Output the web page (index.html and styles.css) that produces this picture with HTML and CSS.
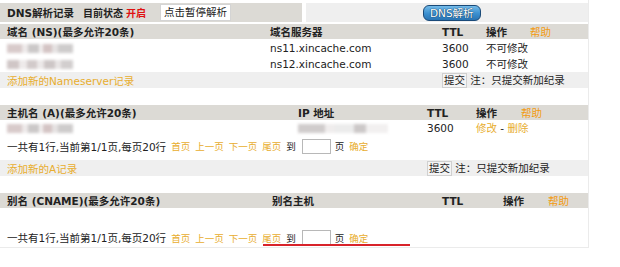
FILE: index.html
```html
<!DOCTYPE html>
<html lang="zh-CN">
<head>
<meta charset="utf-8">
<title>DNS解析记录</title>
<link rel="stylesheet" href="styles.css">
</head>
<body>
<div class="page">
  <div class="topbar">
    <div class="top-left">
      <b class="t-title">DNS解析记录</b>
      <b class="t-state">目前状态</b>
      <b class="t-on">开启</b>
      <span class="pausebtn">点击暂停解析</span>
    </div>
    <div class="top-right"><span class="dnsbtn">DNS解析</span></div>
  </div>

  <section class="sec sec-ns">
    <div class="row head">
      <span>域名 (NS)(最多允许20条)</span><span>域名服务器</span><span>TTL</span><span>操作</span><span class="help">帮助</span>
    </div>
    <div class="row">
      <span><i class="blur"></i></span><span>ns11.xincache.com</span><span>3600</span><span>不可修改</span><span></span>
    </div>
    <div class="row">
      <span><i class="blur b2"></i></span><span>ns12.xincache.com</span><span>3600</span><span>不可修改</span><span></span>
    </div>
    <div class="row add">
      <span class="link">添加新的Nameserver记录</span><span></span>
      <span class="submit-cell"><span class="submit">提交</span> 注：只提交新加纪录</span>
    </div>
  </section>

  <section class="sec sec-a">
    <div class="row head">
      <span>主机名 (A)(最多允许20条)</span><span>IP 地址</span><span>TTL</span><span>操作</span><span class="help">帮助</span>
    </div>
    <div class="row data">
      <span><i class="blur"></i></span><span><i class="blur ip"></i></span><span>3600</span><span><span class="link">修改</span> - <span class="link">删除</span></span><span></span>
    </div>
    <div class="pager">
      一共有1行,当前第1/1页,每页20行
      <span class="link pl">首页</span><span class="link pl">上一页</span><span class="link pl">下一页</span><span class="link pl">尾页</span>
      <span class="pl">到</span><span class="pinput"></span><span class="pl">页</span><span class="link pl">确定</span>
    </div>
    <div class="row add">
      <span class="link">添加新的A记录</span><span></span>
      <span class="submit-cell"><span class="submit">提交</span> 注：只提交新加纪录</span>
    </div>
  </section>

  <section class="sec sec-cname">
    <div class="row head">
      <span>别名 (CNAME)(最多允许20条)</span><span>别名主机</span><span>TTL</span><span>操作</span><span class="help">帮助</span>
    </div>
    <div class="empty"></div>
    <div class="pager last">
      一共有1行,当前第1/1页,每页20行
      <span class="link pl">首页</span><span class="link pl">上一页</span><span class="link pl">下一页</span><span class="link pl">尾页</span>
      <span class="pl">到</span><span class="pinput"></span><span class="pl">页</span><span class="link pl">确定</span>
      <span class="redmark"></span>
    </div>
  </section>
</div>
</body>
</html>
```

FILE: styles.css
```css
html, body {
  margin: 0;
  background: #fff;
}
body {
  font-family: "DejaVu Sans", "Noto Sans CJK SC", sans-serif;
  font-size: 10.5px;
  color: #222;
}
.page {
  width: 589px;
  height: 248px;
  box-sizing: border-box;
  padding-top: 3px;
  border-right: 1px solid #ebebeb;
  border-bottom: 1px solid #ebebeb;
}

/* top bar */
.topbar {
  display: flex;
  gap: 4px;
  height: 19px;
}
.top-left {
  width: 302px;
  background: #dcdad5;
  display: flex;
  align-items: center;
  padding-left: 7px;
  box-sizing: border-box;
  white-space: nowrap;
}
.t-title { flex: none; width: 76px; }
.t-state { flex: none; width: 43px; font-size: 10px; }
.t-on { flex: none; color: #e01010; width: 34px; font-size: 10px; }
.pausebtn {
  background: #fff;
  border: 1px solid #d4d4d4;
  padding: 0 3px;
  line-height: 15px;
  font-weight: normal;
}
.top-right {
  flex: 1;
  background: #efefef;
  display: flex;
  align-items: center;
  padding-left: 117px;
}
.dnsbtn {
  display: inline-block;
  height: 14px;
  line-height: 14px;
  padding: 0 6px;
  border: 1px solid #1a4a78;
  border-radius: 6px;
  background: linear-gradient(#74bbe9, #3a8fcf 55%, #2a74b3);
  color: #fff;
  font-size: 10.5px;
  text-shadow: 0 0 1px #0d3558, 0 0 1px #0d3558;
}

/* sections */
.sec {
  display: flex;
  flex-direction: column;
}
.sec-ns { margin-top: 2px; }
.sec-a { margin-top: 17px; }
.sec-cname { margin-top: 17px; }

.row {
  display: grid;
  height: 15px;
  align-items: center;
  padding-left: 7px;
  white-space: nowrap;
}
.sec-ns .row { grid-template-columns: 263px 172px 44px 44px 1fr; }
.sec-a .row { grid-template-columns: 291px 129px 49px 45px 1fr; }
.sec-cname .row { grid-template-columns: 265px 170px 61px 45px 1fr; }

.head {
  background: #dcdad5;
  font-weight: bold;
}
.sec-ns .row + .row { margin-top: 1px; }
.row.data { height: 14px; }
.add {
  height: 16px;
  background: #efefef;
}
.submit-cell {
  grid-column: 3 / -1;
}
.submit {
  display: inline-block;
  border: 1px solid #d0d0d0;
  background: #f4f4f4;
  line-height: 13px;
  padding: 0 1px;
}

.help { color: #f39a10; font-weight: normal; }
.link { color: #e8ad2e; }

/* blurred data */
.blur {
  display: inline-block;
  width: 66px;
  height: 9px;
  vertical-align: middle;
  background: linear-gradient(90deg,
    #d8caca 0 22%, #eeeaea 22% 32%, #cbc8c8 32% 48%, #f2efef 48% 54%,
    #d4c4c4 54% 68%, #e6e2e2 68% 78%, #cecccc 78% 100%);
  filter: blur(1.4px);
}
.blur.b2 {
  background: linear-gradient(90deg,
    #d0c6c6 0 18%, #eeeaea 18% 30%, #d2caca 30% 46%, #ece8e8 46% 56%,
    #cdc6c6 56% 72%, #e8e4e4 72% 82%, #d2cece 82% 100%);
}
.blur.ip {
  width: 90px;
  background: linear-gradient(90deg,
    #d0cccc 0 30%, #f0eded 30% 40%, #ececec 40% 62%, #ccc8c8 62% 76%, #f2f0f0 76% 100%);
}

/* pager */
.pager {
  height: 22px;
  display: flex;
  align-items: center;
  padding-left: 7px;
  white-space: nowrap;
  margin-top: 1px;
}
.pl { margin-left: 5px; font-size: 9.5px; }
.pinput {
  display: inline-block;
  width: 27px;
  height: 13px;
  border: 1px solid #b8b8b8;
  background: #fff;
  margin-left: 6px;
}
.pinput + .pl { margin-left: 4px; }
.sec-a .pager { margin-bottom: 1px; }
.sec-a .add { margin-top: 2px; }
.empty { height: 20px; }
.pager.last {
  height: 19px;
  margin-top: 0;
  position: relative;
}
.redmark {
  position: absolute;
  left: 263px;
  width: 147px;
  top: 16px;
  height: 2px;
  background: #d8232a;
}
```
